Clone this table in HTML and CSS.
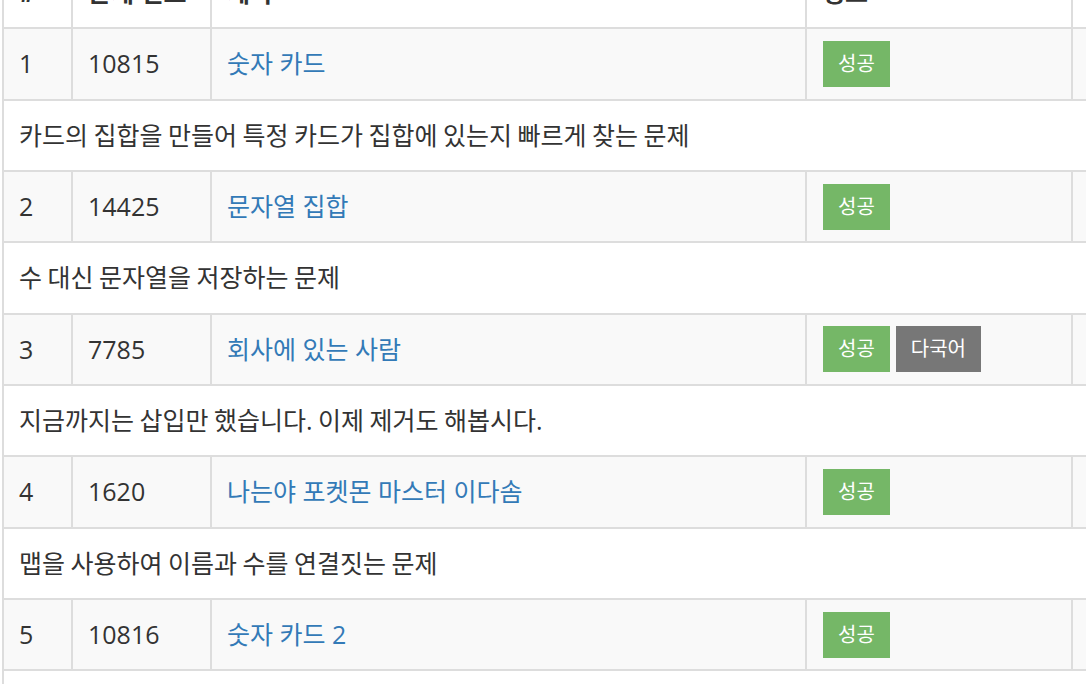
FILE: index.html
```html
<!DOCTYPE html>
<html lang="ko">
<head>
<meta charset="utf-8">
<title>문제 목록</title>
<link rel="stylesheet" href="styles.css">
</head>
<body>
<div class="viewport">
<table class="problems">
  <colgroup>
    <col class="c-idx">
    <col class="c-id">
    <col class="c-title">
    <col class="c-info">
    <col class="c-extra">
  </colgroup>
  <thead>
    <tr>
      <th>#</th>
      <th>문제 번호</th>
      <th>제목</th>
      <th>정보</th>
      <th></th>
    </tr>
  </thead>
  <tbody>
    <tr class="prob">
      <td>1</td>
      <td>10815</td>
      <td><a href="#">숫자 카드</a></td>
      <td><div class="labels"><span class="label ok">성공</span></div></td>
      <td></td>
    </tr>
    <tr class="desc"><td colspan="5">카드의 집합을 만들어 특정 카드가 집합에 있는지 빠르게 찾는 문제</td></tr>
    <tr class="prob">
      <td>2</td>
      <td>14425</td>
      <td><a href="#">문자열 집합</a></td>
      <td><div class="labels"><span class="label ok">성공</span></div></td>
      <td></td>
    </tr>
    <tr class="desc"><td colspan="5">수 대신 문자열을 저장하는 문제</td></tr>
    <tr class="prob">
      <td>3</td>
      <td>7785</td>
      <td><a href="#">회사에 있는 사람</a></td>
      <td><div class="labels"><span class="label ok">성공</span><span class="label lang">다국어</span></div></td>
      <td></td>
    </tr>
    <tr class="desc"><td colspan="5">지금까지는 삽입만 했습니다. 이제 제거도 해봅시다.</td></tr>
    <tr class="prob">
      <td>4</td>
      <td>1620</td>
      <td><a href="#">나는야 포켓몬 마스터 이다솜</a></td>
      <td><div class="labels"><span class="label ok">성공</span></div></td>
      <td></td>
    </tr>
    <tr class="desc"><td colspan="5">맵을 사용하여 이름과 수를 연결짓는 문제</td></tr>
    <tr class="prob">
      <td>5</td>
      <td>10816</td>
      <td><a href="#">숫자 카드 2</a></td>
      <td><div class="labels"><span class="label ok">성공</span></div></td>
      <td></td>
    </tr>
    <tr class="desc"><td colspan="5">숫자 카드가 몇 개 있는지 세는 문제</td></tr>
  </tbody>
</table>
</div>
</body>
</html>
```
FILE: styles.css
```css
html, body {
  margin: 0;
  padding: 0;
  background: #fff;
  overflow: hidden;
}

body {
  font-family: "Open Sans", "Noto Sans CJK KR", sans-serif;
  font-size: 25px;
  color: #333;
}

.viewport {
  width: 1086px;
  height: 684px;
  overflow: hidden;
}

.problems {
  table-layout: fixed;
  width: 1270px;
  border-collapse: separate;
  border-spacing: 0;
  margin: -44px 0 0 2px;
  border-left: 2px solid #ddd;
  border-top: 2px solid #ddd;
}

.c-idx { width: 69px; }
.c-id { width: 139px; }
.c-title { width: 595px; }
.c-info { width: 266px; }
.c-extra { width: 199px; }

.problems th,
.problems td {
  height: 37.33px;
  padding: 16px 15px;
  line-height: 37.33px;
  border-right: 2px solid #ddd;
  border-bottom: 2px solid #ddd;
  text-align: left;
  white-space: nowrap;
  overflow: hidden;
}

.problems th {
  font-weight: 700;
  vertical-align: bottom;
  background: #fff;
}

.problems td {
  vertical-align: middle;
}

.prob td {
  background: #f9f9f9;
}

.desc td {
  background: #fff;
  word-spacing: -1px;
}

.problems a {
  color: #337ab7;
  text-decoration: none;
}

.labels {
  display: flex;
  gap: 6px;
  align-items: center;
  height: 37.33px;
  padding-left: 1px;
}

.label {
  flex: none;
  display: block;
  height: 46px;
  line-height: 46px;
  padding: 0 15px;
  font-size: 20px;
  color: #fff;
}

.label.ok {
  background: #75b767;
}

.label.lang {
  background: #777;
}
```
